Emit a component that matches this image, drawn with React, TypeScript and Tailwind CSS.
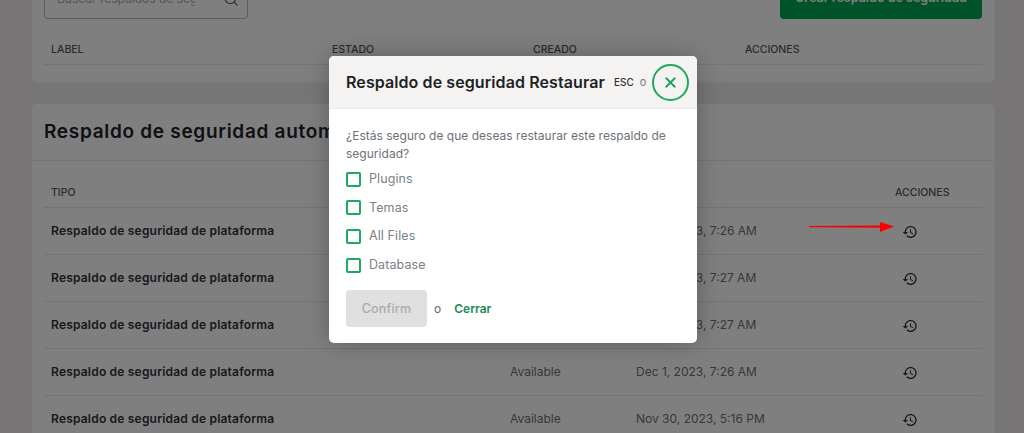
import { Search, X } from 'lucide-react'

const rows = [
  { status: 'Available', date: 'Dec 1, 2023, 7:26 AM' },
  { status: 'Available', date: 'Dec 1, 2023, 7:27 AM' },
  { status: 'Available', date: 'Dec 1, 2023, 7:27 AM' },
  { status: 'Available', date: 'Dec 1, 2023, 7:26 AM' },
  { status: 'Available', date: 'Nov 30, 2023, 5:16 PM' },
]

const options = ['Plugins', 'Temas', 'All Files', 'Database']

function HistoryIcon() {
  return (
    <svg width="16" height="16" viewBox="0 0 24 24" fill="currentColor">
      <path d="M13 3c-4.97 0-9 4.03-9 9H1l3.89 3.89.07.14L9 12H6c0-3.87 3.13-7 7-7s7 3.13 7 7-3.13 7-7 7c-1.93 0-3.68-.79-4.94-2.06l-1.42 1.42C8.27 19.99 10.51 21 13 21c4.97 0 9-4.03 9-9s-4.03-9-9-9zm-1 5v5l4.28 2.54.72-1.21-3.5-2.08V8H12z" />
    </svg>
  )
}

function RestoreModal() {
  return (
    <div className="absolute top-[56px] left-[329px] w-[368px] overflow-hidden rounded-[5px] bg-white shadow-[0_0_24px_rgba(0,0,0,0.25)]">
      <div className="flex h-[53px] items-center border-b border-[#e8e8e8] bg-[#f4f3f1] pr-[8px] pl-[17px]">
        <h2 className="text-[16px] font-semibold tracking-[0.09px] whitespace-nowrap text-[#1d2327]">
          Respaldo de seguridad Restaurar
        </h2>
        <span className="ml-[9px] text-[10px] font-medium text-[#333]">ESC</span>
        <span className="ml-[6px] text-[11px] text-[#777]">o</span>
        <button className="ml-[6px] flex h-[37px] w-[37px] shrink-0 items-center justify-center rounded-full border-2 border-[#1fa85f] text-[#16a05a]">
          <X size={17} strokeWidth={2.5} />
        </button>
      </div>
      <div className="px-[17px] pt-[18px] pb-[16px]">
        <p className="text-[12px] leading-[18px] tracking-[0.02px] text-[#6b7177]">
          ¿Estás seguro de que deseas restaurar este respaldo de seguridad?
        </p>
        <div className="mt-[2px] flex flex-col">
          {options.map((option) => (
            <label key={option} className="flex h-[28.6px] items-center gap-[8px]">
              <span className="h-[15px] w-[15px] rounded-[2px] border-2 border-[#1fa85f]" />
              <span className="text-[12.5px] tracking-[0.1px] text-[#7a8086]">{option}</span>
            </label>
          ))}
        </div>
        <div className="mt-[11px] flex items-center">
          <button className="h-[37px] w-[81px] rounded-[4px] bg-[#e0e0e0] text-[12.5px] font-medium tracking-[0.2px] text-[#aaa]">
            Confirm
          </button>
          <span className="ml-[7px] text-[12px] text-[#666]">o</span>
          <a className="ml-[13px] text-[12px] font-semibold text-[#1c8a55]">Cerrar</a>
        </div>
      </div>
    </div>
  )
}

export default function App() {
  return (
    <div className="relative h-[433px] w-[1024px] overflow-hidden bg-[#eeeaea] font-['Inter',sans-serif]">
      <div className="ml-[31px] flex w-[964px] flex-col gap-[20px]">
        {/* Manual backups, top is scrolled out of view */}
        <section className="-mt-[24px] rounded-[5px] border border-[#f0f0f0] bg-white px-[12px]">
          <div className="flex items-start justify-between pt-[1px]">
            <div className="flex h-[41px] w-[204px] items-center justify-between rounded-[4px] border border-[#b9b9b9] pr-[8px] pl-[12px]">
              <span className="w-[138px] overflow-hidden text-[12px] whitespace-nowrap text-[#aaa]">
                Buscar respaldos de seguridad
              </span>
              <Search size={16} className="shrink-0 text-[#666]" />
            </div>
            <button className="h-[41px] w-[202px] rounded-[4px] bg-[#00a651] text-[12.5px] font-semibold text-white">
              Crear respaldo de seguridad
            </button>
          </div>
          <div className="mt-[19px] grid h-[27px] grid-cols-[281px_201px_212px_1fr] items-end border-b border-[#e8e8e8] pb-[6px] pl-[7px] text-[10.5px] font-medium text-[#50575e]">
            <span>LABEL</span>
            <span>ESTADO</span>
            <span>CREADO</span>
            <span>ACCIONES</span>
          </div>
          <div className="h-[17px]" />
        </section>

        {/* Automatic backups */}
        <section className="rounded-[5px] border border-[#f0f0f0] bg-white">
          <div className="flex h-[57px] items-center border-b border-[#e8e8e8] px-[12px]">
            <h1 className="text-[19px] font-semibold tracking-[0.7px] whitespace-nowrap text-[#1d2327]">
              Respaldo de seguridad automáticos
            </h1>
          </div>
          <div className="px-[12px]">
            <div className="grid h-[47px] grid-cols-[459px_126px_259px_1fr] items-end border-b border-[#e8e8e8] pb-[6px] pl-[7px] text-[10.5px] font-medium text-[#50575e]">
              <span>TIPO</span>
              <span>ESTADO</span>
              <span>CREADO</span>
              <span>ACCIONES</span>
            </div>
            {rows.map((row, i) => (
              <div
                key={i}
                className="grid h-[47px] grid-cols-[459px_126px_259px_1fr] items-center border-b border-[#e8e8e8] pl-[7px] text-[12px] text-[#6b7177]"
              >
                <span className="font-semibold tracking-[0.2px] text-[#2c3338]">Respaldo de seguridad de plataforma</span>
                <span>{row.status}</span>
                <span>{row.date}</span>
                <span className="pt-[1px] pl-[7px] text-[#2c3338]">
                  <HistoryIcon />
                </span>
              </div>
            ))}
          </div>
        </section>
      </div>

      {/* Dim layer behind the dialog */}
      <div className="absolute inset-0 bg-black/50" />

      {/* Annotation arrow */}
      <svg className="absolute top-[218px] left-[808px]" width="90" height="16" viewBox="0 0 90 16">
        <path d="M1 8 L72 7.4 V4 L86 8.6 L72 14 V9.8 L1 9.2 Z" fill="#fa0000" />
      </svg>

      <RestoreModal />
    </div>
  )
}
